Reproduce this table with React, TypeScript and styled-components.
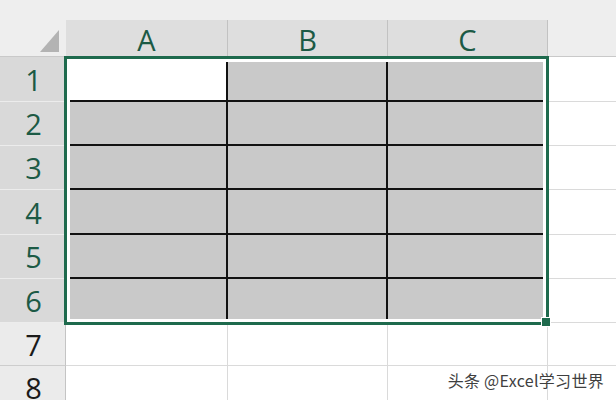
import React from "react";
import styled, { createGlobalStyle } from "styled-components";

const Global = createGlobalStyle`
  html, body { margin: 0; padding: 0; background: #ffffff; }
  #root { width: 616px; height: 400px; }
`;

const GREEN = "#1e6a4d";
const HEAD_TEXT = "#1c5a45";

const Sheet = styled.div`
  position: relative;
  width: 616px;
  height: 400px;
  overflow: hidden;
  background: #ffffff;
  font-family: "Open Sans", "Noto Sans", sans-serif;
`;

const HeaderBand = styled.div`
  display: flex;
  height: 57px;
  box-sizing: border-box;
  background: #eeeeee;
  border-bottom: 1px solid #c9c9c9;
`;

const Corner = styled.div`
  width: 66px;
  flex: none;
  box-sizing: border-box;
  display: flex;
  align-items: flex-end;
  justify-content: flex-end;
  padding: 0 7px 4px 0;
`;

const ColHeader = styled.div<{ $w: number }>`
  width: ${(p) => p.$w}px;
  flex: none;
  align-self: flex-end;
  height: 36px;
  box-sizing: border-box;
  background: #dedede;
  border-right: 1px solid #c2c2c2;
  display: flex;
  align-items: center;
  justify-content: center;
  font-size: 29px;
  font-weight: 400;
  color: ${HEAD_TEXT};
  line-height: 1;
  padding-top: 3px;
`;

const Filler = styled.div`
  flex: 1;
`;

const Row = styled.div<{ $h: number }>`
  display: flex;
  height: ${(p) => p.$h}px;
`;

const RowHeader = styled.div<{ $sel: boolean }>`
  width: 66px;
  flex: none;
  box-sizing: border-box;
  background: ${(p) => (p.$sel ? "#d9d9d9" : "#ebebeb")};
  border-right: 1px solid #c4c4c4;
  border-bottom: 1px solid ${(p) => (p.$sel ? "#ececec" : "#cdcdcd")};
  display: flex;
  align-items: center;
  justify-content: center;
  font-size: 29px;
  font-weight: 400;
  line-height: 1;
  color: ${(p) => (p.$sel ? HEAD_TEXT : "#1a1a1a")};
  padding-left: 2px;
`;

const Cell = styled.div<{ $w: number; $fill: boolean; $right: boolean; $bottom: boolean }>`
  width: ${(p) => p.$w}px;
  flex: none;
  box-sizing: border-box;
  background: ${(p) => (p.$fill ? "#c9c9c9" : "#ffffff")};
  border-right: ${(p) => (p.$right ? "2px solid #111111" : "1px solid #dadada")};
  border-bottom: ${(p) => (p.$bottom ? "2px solid #111111" : "1px solid #dadada")};
`;

const OpenCell = styled.div`
  flex: 1;
  box-sizing: border-box;
  border-bottom: 1px solid #dadada;
`;

const Selection = styled.div`
  position: absolute;
  left: 64px;
  top: 56px;
  width: 485px;
  height: 269px;
  box-sizing: border-box;
  border: 3px solid ${GREEN};
  box-shadow: inset 0 0 0 3px #ffffff;
  pointer-events: none;
`;

const Handle = styled.div`
  position: absolute;
  left: 541px;
  top: 317px;
  width: 8px;
  height: 8px;
  background: ${GREEN};
  border: 1px solid #ffffff;
`;

const Watermark = styled.div`
  position: absolute;
  right: 12px;
  top: 368px;
  font-family: "Noto Sans CJK SC", "Noto Sans", sans-serif;
  font-size: 16px;
  color: #3f3f3f;
  letter-spacing: 0.3px;
  text-shadow: 0 0 2px #ffffff, 0 0 2px #ffffff;
  white-space: nowrap;
`;

const cols = [
  { label: "A", w: 162 },
  { label: "B", w: 160 },
  { label: "C", w: 160 },
];

const rows = [
  { n: 1, h: 45 },
  { n: 2, h: 44 },
  { n: 3, h: 44 },
  { n: 4, h: 45 },
  { n: 5, h: 44 },
  { n: 6, h: 44 },
  { n: 7, h: 43 },
  { n: 8, h: 44 },
];

export default function App() {
  return (
    <>
      <Global />
      <Sheet>
        <HeaderBand>
          <Corner>
            <svg width="19" height="22" viewBox="0 0 19 22">
              <polygon points="0,22 19,22 19,0" fill="#b3b3b3" />
            </svg>
          </Corner>
          {cols.map((c) => (
            <ColHeader key={c.label} $w={c.w}>
              {c.label}
            </ColHeader>
          ))}
          <Filler />
        </HeaderBand>
        {rows.map((r) => {
          const sel = r.n <= 6;
          return (
            <Row key={r.n} $h={r.h}>
              <RowHeader $sel={sel}>{r.n}</RowHeader>
              {cols.map((c, ci) => {
                const fill = sel && !(r.n === 1 && ci === 0);
                return (
                  <Cell
                    key={c.label}
                    $w={c.w}
                    $fill={fill}
                    $right={sel && ci < 2}
                    $bottom={sel && r.n < 6}
                  />
                );
              })}
              <OpenCell />
            </Row>
          );
        })}
        <Selection />
        <Handle />
        <Watermark>头条 @Excel学习世界</Watermark>
      </Sheet>
    </>
  );
}
